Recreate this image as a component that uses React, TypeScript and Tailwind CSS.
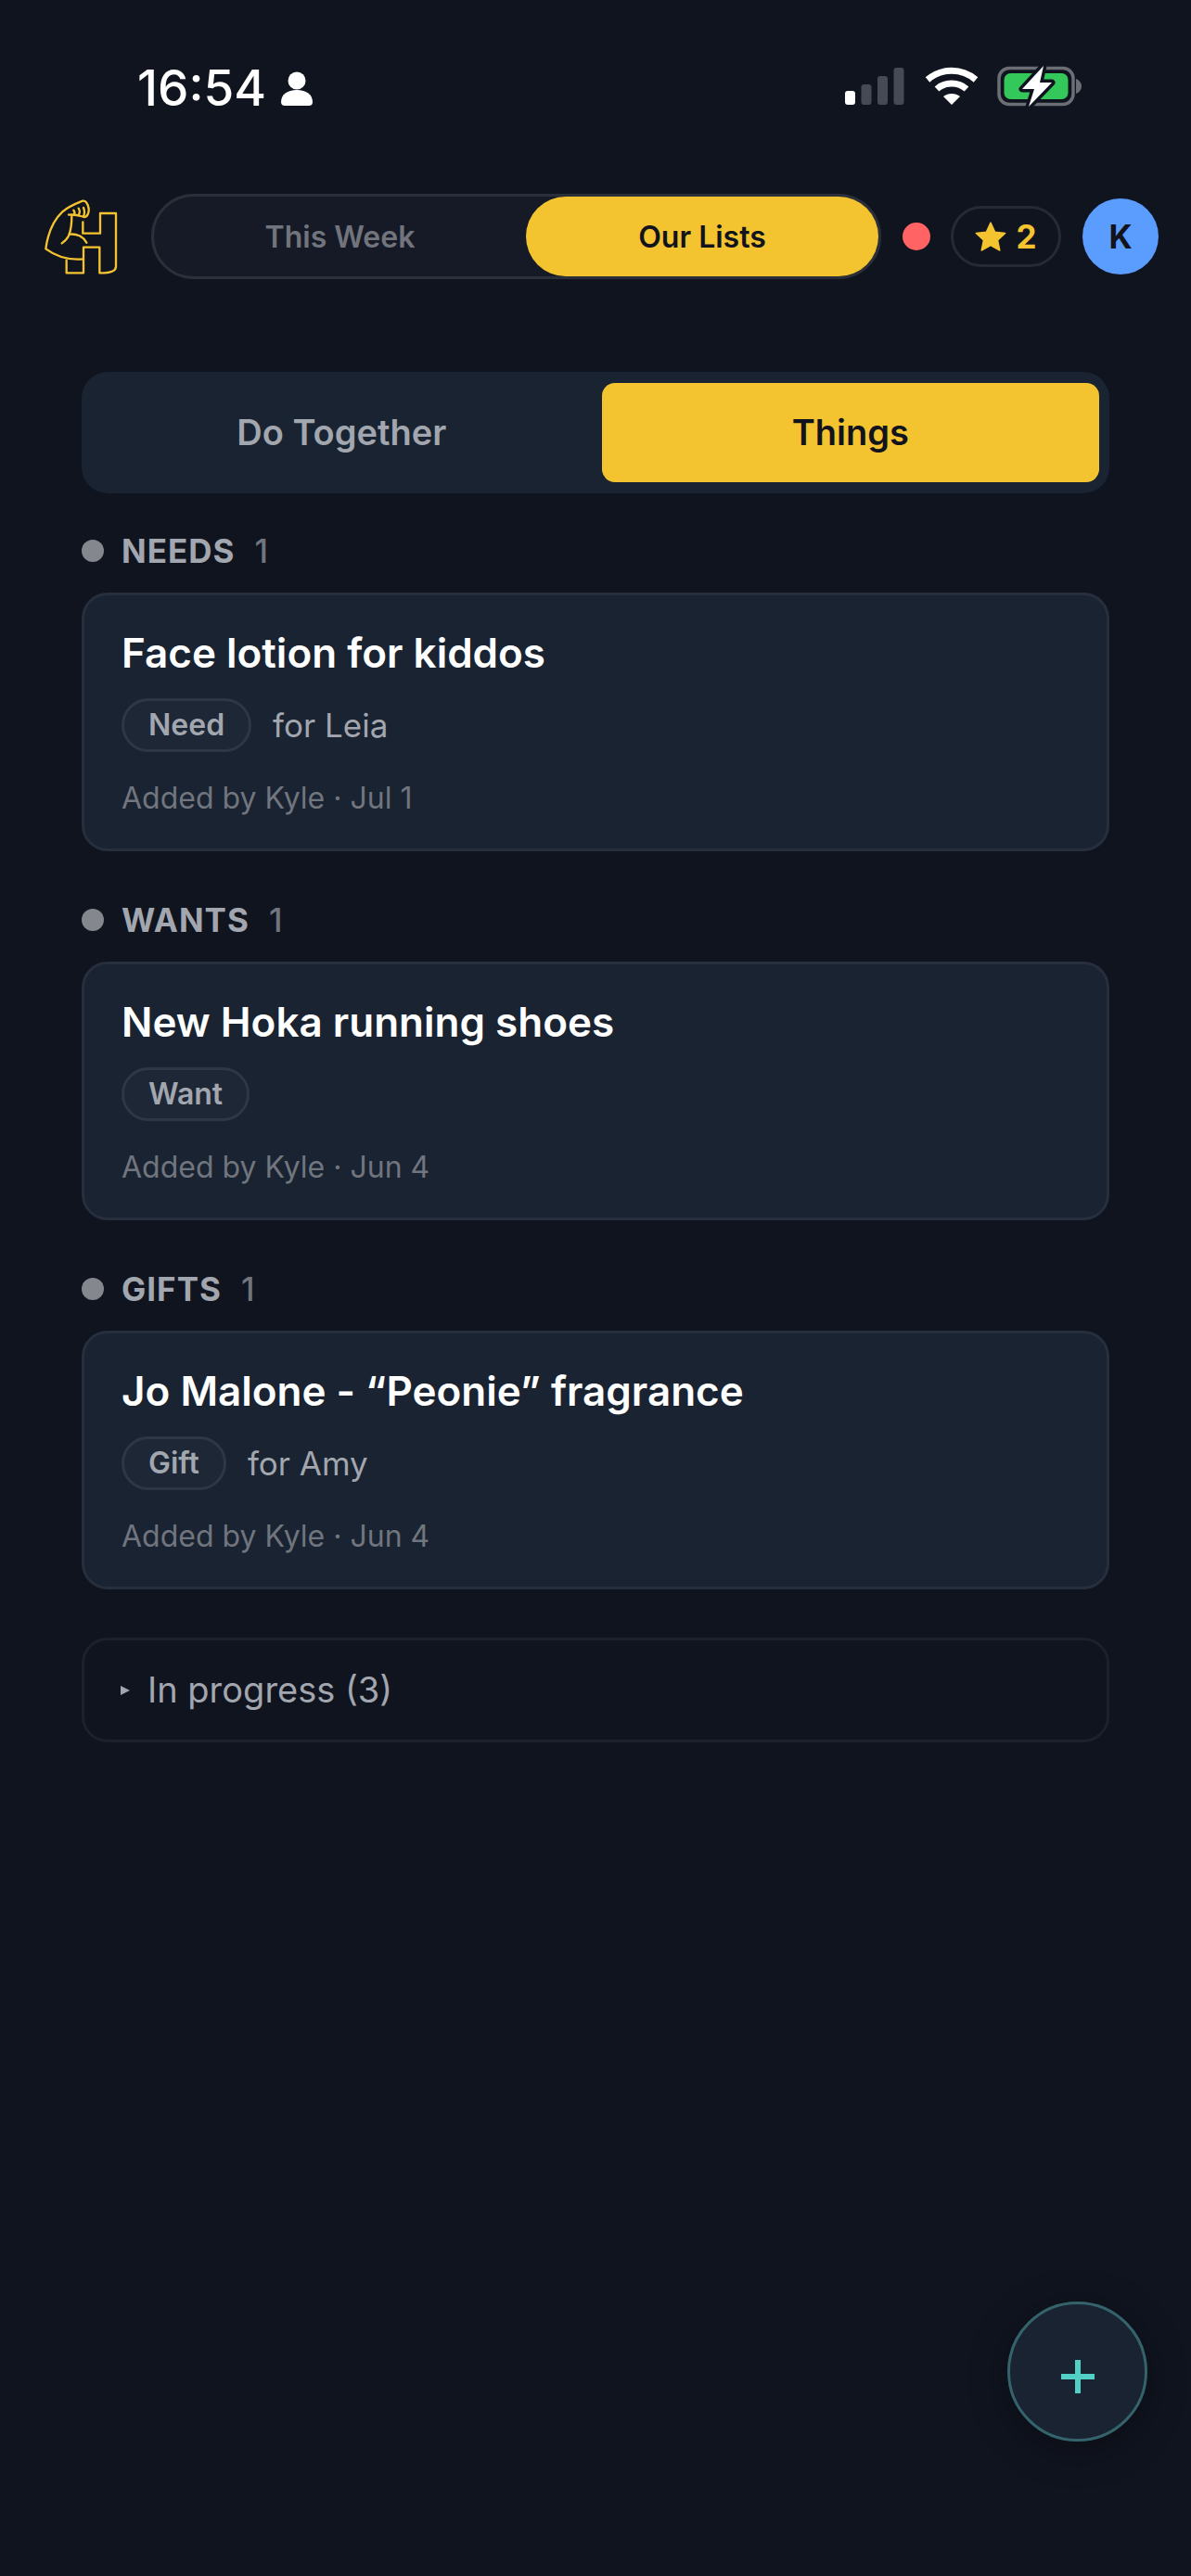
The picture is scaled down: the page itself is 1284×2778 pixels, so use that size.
import { useState } from "react"

const sections = [
  { label: "NEEDS", count: 1, title: "Face lotion for kiddos", tag: "Need", who: "for Leia", date: "Jul 1" },
  { label: "WANTS", count: 1, title: "New Hoka running shoes", tag: "Want", who: "", date: "Jun 4" },
  { label: "GIFTS", count: 1, title: "Jo Malone - “Peonie” fragrance", tag: "Gift", who: "for Amy", date: "Jun 4" },
]

function StatusBar() {
  return (
    <div className="flex h-[209px] items-start justify-between pl-[148px] pr-[117px] pt-[66px]">
      <div className="flex items-center gap-[15px]">
        <span className="text-[53px] leading-[58px] font-medium text-white">16:54</span>
        {/* person glyph */}
        <svg width="36" height="38" viewBox="0 0 36 38" fill="white" className="mt-[2px]">
          <circle cx="18" cy="10" r="9.5" />
          <path d="M1 33c0-8 7-13 17-13s17 5 17 13c0 3-2 4-4 4H5c-2 0-4-1-4-4z" />
        </svg>
      </div>
      <div className="flex items-center gap-[22px] pt-[4px]">
        <svg width="64" height="40" viewBox="0 0 64 40">
          <rect x="0" y="25" width="11" height="15" rx="3" fill="white" />
          <rect x="17.500" y="18" width="11" height="22" rx="3" fill="#464a54" />
          <rect x="35" y="9" width="11" height="31" rx="3" fill="#464a54" />
          <rect x="52.500" y="0" width="11" height="40" rx="3" fill="#464a54" />
        </svg>
        <svg width="58" height="42" viewBox="0 0 58 42" fill="none" stroke="white" strokeWidth="7">
          <path d="M3 14c15-13 37-13 52 0" />
          <path d="M13 24c9-8 23-8 32 0" />
          <path d="M29 41l-9-9c5-4 13-4 18 0z" fill="white" stroke="none" />
        </svg>
        <svg width="92" height="46" viewBox="0 0 92 46" className="-ml-[2px]">
          <rect x="2" y="3.500" width="80" height="39" rx="11" fill="none" stroke="#6b6e75" strokeWidth="3.500" />
          <rect x="7.500" y="9" width="69" height="28" rx="7" fill="#34c759" />
          <path d="M85 15c3 1 6 4 6 8s-3 7-6 8z" fill="#6b6e75" />
          <path d="M50 1 27 26h13l-6 19 25-26H46z" fill="white" stroke="#0f131f" strokeWidth="7" strokeLinejoin="round" paintOrder="stroke" />
        </svg>
      </div>
    </div>
  )
}

function Logo() {
  return (
    <svg width="86" height="90" viewBox="0 0 258 270" fill="none" stroke="#f4c430" strokeWidth="7" strokeLinecap="round" strokeLinejoin="round" className="shrink-0">
      {/* the H */}
      <path d="M136 88V125H192V60H243V232C243 245 232 252 205 253H190V170H138V253H83V212" />
      {/* the arm */}
      <path d="M136 208C90 212 50 200 16 175C22 130 38 85 70 55C85 42 105 32 135 20C145 18 152 28 155 45C156 60 150 72 140 72C130 70 115 62 90 65" />
      <path d="M100 68C100 90 98 110 92 128C88 140 78 150 68 157" />
      <path d="M92 128C115 125 138 135 148 155" />
      <path d="M122 44C126 50 126 60 122 66M138 42C142 52 142 62 138 70M106 50C110 55 110 60 108 64" />
    </svg>
  )
}

function Header() {
  const [view, setView] = useState("Our Lists")
  return (
    <div className="flex h-[92px] items-center pl-[44px] pr-[35px]">
      <Logo />
      <div className="ml-[33px] flex h-[92px] w-[787px] shrink-0 rounded-full border-[3px] border-[#2b2f39] bg-[#151a26]">
        {["This Week", "Our Lists"].map((v) => (
          <button
            key={v}
            onClick={() => setView(v)}
            className={
              view === v
                ? "w-[380px] rounded-full bg-[#f4c430] pt-[2px] text-[32px] font-semibold text-[#11141c]"
                : "flex-1 rounded-full pt-[2px] text-[32px] font-semibold text-[#71747c]"
            }
          >
            {v}
          </button>
        ))}
      </div>
      <div className="ml-[23px] h-[30px] w-[30px] shrink-0 rounded-full bg-[#ff6363]" />
      <div className="ml-[22px] flex h-[66px] w-[119px] shrink-0 items-center justify-center gap-[10px] rounded-full border-[3px] border-[#272a34]">
        <svg width="34" height="32" viewBox="0 0 24 23" fill="#f4c430">
          <path d="M12 .8l3.400 7.300 7.900.9-5.800 5.400 1.600 7.900L12 18.400l-7.100 3.900 1.600-7.900L.7 9l7.900-.9z" stroke="#f4c430" strokeLinejoin="round" />
        </svg>
        <span className="text-[35px] font-bold text-[#f4c430]">2</span>
      </div>
      <div className="ml-[23px] flex h-[82px] w-[82px] shrink-0 items-center justify-center rounded-full bg-[#5b9dff] text-[35px] font-bold text-[#11141c]">
        K
      </div>
    </div>
  )
}

function Card({ title, tag, who, date }: { title: string; tag: string; who: string; date: string }) {
  return (
    <div className="flex h-[279px] flex-col rounded-[28px] border-[3px] border-[#272f3e] bg-[#192331] pl-[40px] pt-[35px]">
      <div className="text-[44px] leading-[54px] font-semibold text-white">{title}</div>
      <div className="mt-[22px] flex h-[58px] items-center gap-[23px]">
        <span className="flex h-[58px] items-center rounded-full border-[3px] border-[#2e3746] bg-[#1e2736] px-[26px] text-[32px] font-semibold text-[#a2a6ae]">
          {tag}
        </span>
        {who && <span className="text-[35px] text-[#a2a6ae]">{who}</span>}
      </div>
      <div className="mt-[30px] text-[32px] leading-[40px] text-[#71757e]">Added by Kyle · {date}</div>
    </div>
  )
}

export default function App() {
  const [tab, setTab] = useState("Things")
  return (
    <div className="relative min-h-[2778px] bg-[#10141f] font-['Inter',sans-serif]">
      <StatusBar />
      <Header />

      <div className="flex flex-col px-[88px] pt-[100px]">
        <div className="grid h-[131px] grid-cols-2 gap-[12px] rounded-[28px] bg-[#192331] p-[12px] pr-[11px]">
          {["Do Together", "Things"].map((t) => (
            <button
              key={t}
              onClick={() => setTab(t)}
              className={
                tab === t
                  ? "rounded-[14px] bg-[#f4c430] text-[38px] font-semibold text-[#11141c]"
                  : "rounded-[14px] text-[38px] font-semibold text-[#a2a6ae]"
              }
            >
              {t}
            </button>
          ))}
        </div>

        <div className="mt-[39px] flex flex-col gap-[51px]">
          {sections.map((s) => (
            <div key={s.label}>
              <div className="flex h-[46px] items-center">
                <span className="h-[24px] w-[24px] rounded-full bg-[#85878f]" />
                <span className="ml-[19px] text-[35px] font-bold tracking-[1px] text-[#a2a6ae]">{s.label}</span>
                <span className="ml-[21px] text-[35px] font-medium text-[#71757e]">{s.count}</span>
              </div>
              <div className="mt-[22px]">
                <Card title={s.title} tag={s.tag} who={s.who} date={s.date} />
              </div>
            </div>
          ))}
        </div>

        <div className="mt-[52px] flex h-[113px] items-center rounded-[28px] border-[3px] border-[#1c212c] pl-[38px]">
          <svg width="12" height="12" viewBox="0 0 12 12" fill="#a2a6ae"><path d="M1 1l10 5-10 5z" /></svg>
          <span className="ml-[18px] text-[38px] text-[#a2a6ae]">In progress (3)</span>
        </div>
      </div>

      <button className="absolute left-[1086px] top-[2482px] flex h-[151px] w-[151px] items-center justify-center rounded-full border-[3px] border-[#35636b] bg-[#192331] shadow-[0_8px_40px_rgba(0,0,0,0.35)]">
        <svg width="38" height="38" viewBox="0 0 38 38" fill="#52d0c5" className="mt-[10px]"><path d="M16 1h6v15h15v6H22v15h-6V22H1v-6h15z" /></svg>
      </button>
    </div>
  )
}
